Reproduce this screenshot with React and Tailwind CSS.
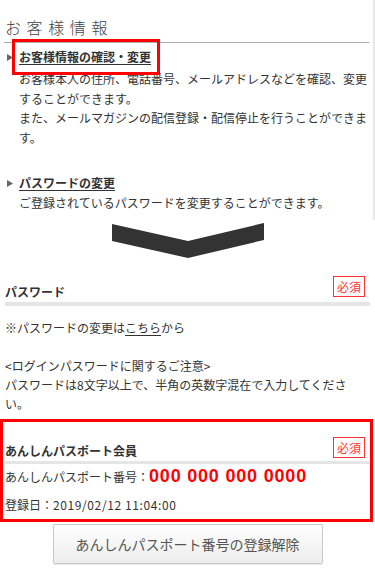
import React from 'react'

const jp = "font-['Noto_Sans_CJK_JP','Noto_Sans',sans-serif]"

function Arrow() {
  return (
    <span className="w-[12px] shrink-0 flex items-center h-[20px]">
      <svg width="6" height="7" viewBox="0 0 6 7">
        <polygon points="0,0 6,3.5 0,7" fill="#666" />
      </svg>
    </span>
  )
}

function Required({ className }) {
  return (
    <span
      className={`flex items-center justify-center w-[32px] h-[21px] border border-[#f33] text-[#f33] text-[12px] leading-none ${className || ''}`}
    >
      必須
    </span>
  )
}

export default function App() {
  return (
    <div className={`w-[375px] h-[569px] overflow-hidden bg-white text-[#333] ${jp}`}>
      {/* お客様情報 */}
      <section className="h-[220px] border-r-2 border-[#e8e8e8]">
        <h2 className="pt-[16px] pl-[5px] text-[16px] leading-[22px] font-light tracking-[5.6px] text-[#444]">
          お客様情報
        </h2>
        <div className="mt-[4px] ml-[4px] w-[365px] h-px bg-[#aaa]" />

        <div className="relative mt-[4px] pl-[7px] flex">
          <Arrow />
          <div className="w-[350px]">
            <a href="#" className="block text-[12px] leading-[20px] font-bold underline underline-offset-2 text-[#333]">
              お客様情報の確認・変更
            </a>
            <p className="mt-[2px] text-[12px] leading-[19.5px]">
              お客様本人の住所、電話番号、メールアドレスなどを確認、変更することができます。
              <br />
              また、メールマガジンの配信登録・配信停止を行うことができます。
            </p>
          </div>
          <div className="absolute left-[12px] top-[-8px] w-[148px] h-[36px] border-[3px] border-[#f00]" />
        </div>

        <div className="mt-[26px] pl-[7px] flex">
          <Arrow />
          <div className="w-[350px]">
            <a href="#" className="block text-[12px] leading-[20px] font-bold underline underline-offset-2 text-[#333]">
              パスワードの変更
            </a>
            <p className="text-[12px] leading-[19.5px]">
              ご登録されているパスワードを変更することができます。
            </p>
          </div>
        </div>
      </section>

      {/* chevron */}
      <div className="mt-[3px] flex justify-center">
        <svg width="152" height="35" viewBox="0 0 152 35">
          <polygon points="0,1 76,18 152,0 152,17 76,35 0,18" fill="#333" />
        </svg>
      </div>

      {/* パスワード */}
      <section className="px-[5px]">
        <div className="mt-[18px] flex justify-between items-start h-[26px]">
          <span className="mt-[7px] text-[12px] leading-[18px] font-bold">パスワード</span>
          <Required className="mr-[5px]" />
        </div>
        <div className="h-[4px] bg-[#e5e5e5]" />
        <div className="mt-[12px] w-[350px] text-[12px] leading-[19px]">
          <p>
            ※パスワードの変更は<a href="#" className="underline underline-offset-2 text-[#333]">こちら</a>から
          </p>
          <br />
          <p>
            &lt;ログインパスワードに関するご注意&gt;
            <br />
            パスワードは8文字以上で、半角の英数字混在で入力してください。
          </p>
        </div>
      </section>

      {/* あんしんパスポート会員 */}
      <section className="mt-[6px] w-[373px] border-[3px] border-[#f00] pl-[2px] pb-[4px]">
        <div className="flex justify-between items-start h-[39px]">
          <span className="mt-[20px] text-[12px] leading-[18px] font-bold">あんしんパスポート会員</span>
          <Required className="mt-[15px] mr-[5px] h-[20px]" />
        </div>
        <div className="h-[3px] bg-[#e5e5e5]" />
        <div className="flex items-baseline h-[24px] leading-[24px]">
          <span className="text-[12px]">あんしんパスポート番号：</span>
          <span className="text-[18px] font-bold text-[#f00] tracking-[0.8px] font-['Liberation_Sans',sans-serif]">
            000 000 000 0000
          </span>
        </div>
        <p className="mt-[7px] text-[12px] leading-[20px]">
          登録日：<span className="tracking-[0.6px]">2019/02/12 11:04:00</span>
        </p>
      </section>

      <button className="mt-[2px] mx-auto flex items-center justify-center w-[270px] h-[40px] rounded-[2px] border border-[#c8c8c8] bg-gradient-to-b from-white to-[#ececec] text-[14px] text-[#555] shadow-[0_1px_1px_rgba(0,0,0,0.08)]">
        あんしんパスポート番号の登録解除
      </button>
    </div>
  )
}
